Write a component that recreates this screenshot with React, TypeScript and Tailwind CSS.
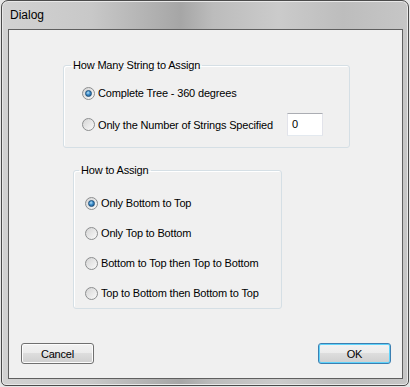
import React from "react";

const font = { fontFamily: "'Liberation Sans', Arial, sans-serif" };

function Radio({ checked, label }: { checked?: boolean; label: string }) {
  return (
    <label className="flex items-center gap-[3px] h-[16px] whitespace-nowrap">
      <span className="w-[13px] h-[13px] rounded-full border border-[#8c8e8f] bg-[linear-gradient(135deg,#d4d4d4,#fafafa)] flex items-center justify-center shrink-0">
        {checked && (
          <span className="w-[7px] h-[7px] rounded-full bg-[radial-gradient(circle_at_40%_35%,#b8e2f8_0%,#3a8ccc_45%,#1b4f7e_100%)] border border-[#1d4f7a]" />
        )}
      </span>
      <span>{label}</span>
    </label>
  );
}

function Button({ label, focused }: { label: string; focused?: boolean }) {
  return (
    <button
      className={
        focused
          ? "w-[73px] h-[21px] rounded-[3px] border border-[#3c7fb1] shadow-[inset_0_0_0_1px_#5fd3fb] bg-[linear-gradient(#f2f2f2_0%,#ebebeb_50%,#dddddd_50%,#cfcfcf_100%)] text-black"
          : "w-[73px] h-[21px] rounded-[3px] border border-[#707070] shadow-[inset_0_0_0_1px_#fcfcfc] bg-[linear-gradient(#f2f2f2_0%,#ebebeb_50%,#dddddd_50%,#cfcfcf_100%)] text-black"
      }
    >
      {label}
    </button>
  );
}

export default function App() {
  return (
    <div className="w-[410px] h-[387px] bg-[#e6e6e6] pl-[1px] text-[11px] leading-[16px] tracking-[-0.17px] text-black" style={font}>
      <div className="w-[408px] h-[386px] rounded-t-[7px] rounded-b-[5px] border border-[#4b4b4b] bg-[linear-gradient(90deg,#d2d2d2_0%,#c8c8c8_22%,#a6a6a6_44%,#bcbcbc_52%,#cbcbcb_68%,#bdbdbd_84%,#c6c6c6_100%)] shadow-[inset_0_0_0_1px_#e8e8e8] flex flex-col">
        <div className="h-[28px] pl-[8px] pt-[6px] text-[12px] tracking-normal text-black">Dialog</div>
        <div className="ml-[6px] mr-[5px] h-[350px] border border-[#5f5f5f] bg-[#f0f0f0] flex flex-col">
          <fieldset className="ml-[54px] mt-[27px] w-[287px] border border-[#d5dfe5] rounded-[3px] shadow-[inset_1px_1px_0_#fff]">
            <legend className="ml-[7px] px-[2px]">How Many String to Assign</legend>
            <div className="pl-[18px] pr-[26px] pt-[12px] pb-[11px] flex flex-col">
              <Radio checked label="Complete Tree - 360 degrees" />
              <div className="mt-[12px] flex items-center">
                <Radio label="Only the Number of Strings Specified" />
                <div className="ml-auto w-[36px] h-[23px] bg-white border border-[#e2e3ea] border-t-[#abadb3] border-b-[#e3e9ef] pl-[4px] pt-[2px]">
                  0
                </div>
              </div>
            </div>
          </fieldset>
          <fieldset className="ml-[64px] mt-[14px] w-[209px] border border-[#d5dfe5] rounded-[3px] shadow-[inset_1px_1px_0_#fff]">
            <legend className="ml-[5px] px-[2px]">How to Assign</legend>
            <div className="pl-[11px] pt-[17px] pb-[7px] flex flex-col gap-[14px]">
              <Radio checked label="Only Bottom to Top" />
              <Radio label="Only Top to Bottom" />
              <Radio label="Bottom to Top then Top to Bottom" />
              <Radio label="Top to Bottom then Bottom to Top" />
            </div>
          </fieldset>
          <div className="mt-[34px] pl-[12px] pr-[11px] flex justify-between">
            <Button label="Cancel" />
            <Button label="OK" focused />
          </div>
        </div>
      </div>
    </div>
  );
}
